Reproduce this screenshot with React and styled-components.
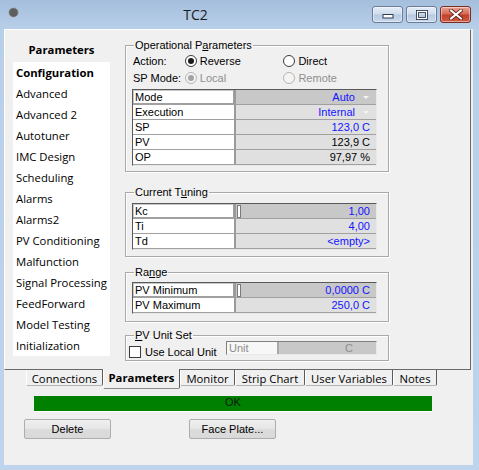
import React from 'react'
import styled, { createGlobalStyle } from 'styled-components'

const uiFont = `'Open Sans', 'Noto Sans', sans-serif`
const dlgFont = `'Liberation Sans', Arial, sans-serif`

const GlobalStyle = createGlobalStyle`
  html, body {
    margin: 0;
    padding: 0;
  }
  body {
    background: #bfd5ec;
    font-family: ${dlgFont};
  }
`

const Window = styled.div`
  width: 479px;
  height: 470px;
  box-sizing: border-box;
  display: flex;
  flex-direction: column;
  background: linear-gradient(180deg, #a4bedb 0%, #b8cfe9 29px, #bed4ec 100%);
  overflow: hidden;
`

const TitleBar = styled.div`
  height: 29px;
  box-sizing: border-box;
  display: flex;
  align-items: flex-start;
  padding: 6px 8px 0 8px;
  flex-shrink: 0;
`

const AppIcon = styled.svg`
  width: 11px;
  height: 11px;
  margin-top: 1px;
`

const Caption = styled.div`
  flex: 1;
  text-align: center;
  font: 14px ${uiFont};
  line-height: 18px;
  color: #1b1b24;
`

const CaptionButtons = styled.div`
  display: flex;
  gap: 3px;
`

const CaptionButton = styled.div`
  width: 31px;
  height: 17px;
  box-sizing: border-box;
  border: 1px solid ${p => (p.$close ? '#7b2b22' : '#6a7c98')};
  border-radius: 3px;
  display: flex;
  align-items: center;
  justify-content: center;
  background: ${p =>
    p.$close
      ? 'linear-gradient(180deg, #e9a796 0%, #d66a55 45%, #c2402b 55%, #cf5b43 100%)'
      : 'linear-gradient(180deg, #e6eef8 0%, #cfdcec 45%, #b7cae1 55%, #c9d9ec 100%)'};
  box-shadow: inset 0 0 0 1px rgba(255, 255, 255, 0.45);
`

const Client = styled.div`
  flex: 1;
  margin: 0 6px 5px 4px;
  background: #f0f0f0;
  display: flex;
  flex-direction: column;
`

const TabPage = styled.div`
  height: 341px;
  margin-right: 2px;
  box-sizing: border-box;
  border-style: solid;
  border-width: 1px;
  border-color: #ffffff #696969 #696969 #ffffff;
  display: flex;
  padding-left: 8px;
`

const SideColumn = styled.div`
  width: 97px;
  display: flex;
  flex-direction: column;
`

const SideHeader = styled.div`
  height: 32px;
  box-sizing: border-box;
  padding-top: 12px;
  line-height: 15px;
  text-align: center;
  font: bold 11.3px ${uiFont};
  color: #000;
`

const ListBox = styled.div`
  background: #ffffff;
  height: 294px;
  box-sizing: border-box;
  padding-top: 3px;
`

const ListItem = styled.div`
  height: 21px;
  line-height: 21px;
  padding-left: 3px;
  font: ${p => (p.$bold ? 'bold' : 'normal')} 11.3px ${uiFont};
  color: #000;
  white-space: nowrap;
`

const MainColumn = styled.div`
  width: 264px;
  margin-left: 15px;
  display: flex;
  flex-direction: column;
`

const Group = styled.fieldset`
  margin: ${p => p.$top}px 0 0 0;
  padding: ${p => p.$pt}px 6px ${p => p.$pb}px 6px;
  min-width: 0;
  border: 1px solid #a9a9a9;
  box-shadow: inset 1px 1px 0 #fff, 1px 1px 0 #fff;
  font: 11px ${dlgFont};
`

const Legend = styled.legend`
  padding: 0 1px;
  margin-left: 2px;
  line-height: 12px;
  font: 11px ${dlgFont};
  color: #000;
`

const OptionRow = styled.div`
  display: flex;
  align-items: center;
  height: 16px;
  margin-top: ${p => p.$top || 0}px;
  margin-left: 1px;
`

const OptionLabel = styled.div`
  width: 52px;
  color: #000;
`

const RadioOption = styled.div`
  width: ${p => p.$w || 99}px;
  display: flex;
  align-items: center;
  gap: 3px;
  color: ${p => (p.$disabled ? '#8f8f8f' : '#000')};
`

const RadioDot = styled.span`
  width: 12px;
  height: 12px;
  box-sizing: border-box;
  border-radius: 50%;
  border: 1px solid ${p => (p.$disabled ? '#b5b5b5' : '#3a3a3a')};
  background: ${p => (p.$disabled ? '#f4f4f4' : '#ffffff')};
  display: flex;
  align-items: center;
  justify-content: center;
  &::after {
    content: '';
    width: 6px;
    height: 6px;
    border-radius: 50%;
    background: ${p => (p.$disabled ? '#a3a3a3' : '#1a1a1a')};
    display: ${p => (p.$checked ? 'block' : 'none')};
  }
`

const PropGrid = styled.div`
  width: 245px;
  box-sizing: border-box;
  margin-top: ${p => p.$top || 0}px;
  border-style: solid;
  border-width: 1px;
  border-color: #595959 #e8e8e8 #e8e8e8 #595959;
  box-shadow: inset 1px 1px 0 #a0a0a0;
`

const PropRow = styled.div`
  display: grid;
  grid-template-columns: 103px 1fr;
  height: 15px;
  box-sizing: border-box;
  border-bottom: 1px solid #a0a0a0;
  line-height: 14px;
`

const PropLabel = styled.div`
  background: #ffffff;
  padding-left: 2px;
  border-right: 2px solid #9a9a9a;
  color: #000;
  white-space: nowrap;
  box-shadow: ${p => (p.$active ? 'inset -1px -1px 0 #a0a0a0, inset 1px 1px 0 #c8c8c8' : 'none')};
`

const PropValue = styled.div`
  display: flex;
  align-items: center;
  justify-content: flex-end;
  padding-right: ${p => (p.$drop ? 7 : 6)}px;
  background: ${p => (p.$active ? '#c8c8c8' : '#e0e0e0')};
  color: ${p => (p.$blue ? '#1414ff' : '#000')};
  white-space: nowrap;
`

const DropArrow = styled.span`
  width: 0;
  height: 0;
  margin-left: 8px;
  border-left: 3px solid transparent;
  border-right: 3px solid transparent;
  border-top: 3px solid #f4f4f4;
`

const Thumb = styled.span`
  width: 2px;
  height: 11px;
  margin-left: 1px;
  margin-right: auto;
  background: #ffffff;
  border: 1px solid #7a7a7a;
`

const UnitRow = styled.div`
  display: flex;
  align-items: flex-start;
  height: 14px;
`

const CheckOption = styled.div`
  display: flex;
  align-items: center;
  gap: 4px;
  margin: 5px 0 0 -3px;
  color: #000;
`

const CheckBox = styled.span`
  width: 12px;
  height: 12px;
  box-sizing: border-box;
  border: 1px solid #3a3a3a;
  background: #ffffff;
`

const UnitBox = styled.div`
  margin: 0 5px 0 auto;
  width: 151px;
  height: 14px;
  box-sizing: border-box;
  display: grid;
  grid-template-columns: 52px 1fr;
  border-style: solid;
  border-width: 1px;
  border-color: #808080 #e8e8e8 #e8e8e8 #808080;
  line-height: 12px;
  color: #8d8d8d;
`

const UnitLabel = styled.div`
  background: #f7f7f7;
  padding-left: 2px;
  border-right: 2px solid #a8a8a8;
`

const UnitValue = styled.div`
  background: #c8c8c8;
  text-align: right;
  padding-right: 23px;
`

const TabBar = styled.div`
  display: flex;
  align-items: flex-start;
  height: 16px;
  margin-left: 22px;
`

const Tab = styled.div`
  width: ${p => p.$w}px;
  height: ${p => (p.$active ? 20 : 16)}px;
  margin-top: ${p => (p.$active ? -1 : 0)}px;
  box-sizing: border-box;
  padding-top: 1px;
  background: #f0f0f0;
  border-left: 1px solid #ffffff;
  border-right: 1px solid #5a5a5a;
  border-bottom: 1px solid ${p => (p.$active ? '#8a8a8a' : '#b4b4b4')};
  border-bottom-left-radius: 2px;
  border-bottom-right-radius: 2px;
  text-align: center;
  line-height: 14px;
  font: ${p => (p.$active ? 'bold' : 'normal')} 11.3px ${uiFont};
  color: #000;
  white-space: nowrap;
`

const StatusBar = styled.div`
  width: 398px;
  height: 15px;
  margin: 10px 0 0 30px;
  background: #008000;
  box-shadow: 0 1px 0 #ffffff;
  text-align: center;
  line-height: 15px;
  font: 11px ${dlgFont};
  color: #0b1a0b;
`

const ButtonRow = styled.div`
  display: flex;
  gap: 78px;
  margin-top: 8px;
  padding-left: 20px;
`

const PushButton = styled.button`
  width: 87px;
  height: 20px;
  padding: 0;
  box-sizing: border-box;
  border: 1px solid #adadad;
  border-radius: 2px;
  background: linear-gradient(180deg, #efefef 0%, #e6e6e6 50%, #dcdcdc 51%, #d9d9d9 100%);
  font: 11px ${dlgFont};
  color: #000;
`

const menu = [
  'Configuration', 'Advanced', 'Advanced 2', 'Autotuner', 'IMC Design', 'Scheduling',
  'Alarms', 'Alarms2', 'PV Conditioning', 'Malfunction', 'Signal Processing',
  'FeedForward', 'Model Testing', 'Initialization',
]

const operational = [
  { label: 'Mode', value: 'Auto', blue: true, drop: true, active: true },
  { label: 'Execution', value: 'Internal', blue: true, drop: true },
  { label: 'SP', value: '123,0 C', blue: true },
  { label: 'PV', value: '123,9 C' },
  { label: 'OP', value: '97,97 %' },
]

const tuning = [
  { label: 'Kc', value: '1,00', blue: true, active: true, thumb: true },
  { label: 'Ti', value: '4,00', blue: true },
  { label: 'Td', value: '<empty>', blue: true },
]

const range = [
  { label: 'PV Minimum', value: '0,0000 C', blue: true, active: true, thumb: true },
  { label: 'PV Maximum', value: '250,0 C', blue: true },
]

const tabs = [
  { name: 'Connections', w: 77 },
  { name: 'Parameters', w: 77, active: true },
  { name: 'Monitor', w: 55 },
  { name: 'Strip Chart', w: 70 },
  { name: 'User Variables', w: 88 },
  { name: 'Notes', w: 44 },
]

function Grid({ rows, top }) {
  return (
    <PropGrid $top={top}>
      {rows.map(r => (
        <PropRow key={r.label}>
          <PropLabel $active={r.active}>{r.label}</PropLabel>
          <PropValue $active={r.active} $blue={r.blue} $drop={r.drop}>
            {r.thumb && <Thumb />}
            {r.value}
            {r.drop && <DropArrow />}
          </PropValue>
        </PropRow>
      ))}
    </PropGrid>
  )
}

function Radio({ checked, disabled, w, children }) {
  return (
    <RadioOption $w={w} $disabled={disabled}>
      <RadioDot $checked={checked} $disabled={disabled} />
      {children}
    </RadioOption>
  )
}

export default function App() {
  return (
    <Window>
      <GlobalStyle />
      <TitleBar>
        <AppIcon viewBox="0 0 11 11">
          <circle cx="5.5" cy="5.5" r="4.6" fill="#5e5e5e" stroke="#9a9a9a" strokeWidth="1" strokeDasharray="1.2 1" />
        </AppIcon>
        <Caption>TC2</Caption>
        <CaptionButtons>
          <CaptionButton>
            <svg width="12" height="8" viewBox="0 0 12 8">
              <rect x="1" y="3.5" width="10" height="3.5" fill="#fff" stroke="#2f3b4f" strokeWidth="1" />
            </svg>
          </CaptionButton>
          <CaptionButton>
            <svg width="12" height="10" viewBox="0 0 12 10">
              <rect x="1.5" y="1.5" width="9" height="7" fill="none" stroke="#2f3b4f" strokeWidth="3" />
              <rect x="1.5" y="1.5" width="9" height="7" fill="none" stroke="#fff" strokeWidth="1.2" />
            </svg>
          </CaptionButton>
          <CaptionButton $close>
            <svg width="14" height="11" viewBox="0 0 14 11">
              <path d="M2 1.5 L12 9.5 M12 1.5 L2 9.5" stroke="#5a1d15" strokeWidth="3.6" strokeLinecap="square" />
              <path d="M2 1.5 L12 9.5 M12 1.5 L2 9.5" stroke="#fff" strokeWidth="2" strokeLinecap="square" />
            </svg>
          </CaptionButton>
        </CaptionButtons>
      </TitleBar>

      <Client>
        <TabPage>
          <SideColumn>
            <SideHeader>Parameters</SideHeader>
            <ListBox>
              {menu.map((m, i) => (
                <ListItem key={m} $bold={i === 0}>{m}</ListItem>
              ))}
            </ListBox>
          </SideColumn>

          <MainColumn>
            <Group $top={9} $pt={2} $pb={5}>
              <Legend>Operational P<u>a</u>rameters</Legend>
              <OptionRow>
                <OptionLabel>Action:</OptionLabel>
                <Radio checked>Reverse</Radio>
                <Radio>Direct</Radio>
              </OptionRow>
              <OptionRow $top={1}>
                <OptionLabel>SP Mode:</OptionLabel>
                <Radio checked disabled>Local</Radio>
                <Radio disabled>Remote</Radio>
              </OptionRow>
              <Grid rows={operational} top={3} />
            </Group>

            <Group $top={14} $pt={5} $pb={6}>
              <Legend>Current T<u>u</u>ning</Legend>
              <Grid rows={tuning} />
            </Group>

            <Group $top={9} $pt={4} $pb={7}>
              <Legend>Ra<u>n</u>ge</Legend>
              <Grid rows={range} />
            </Group>

            <Group $top={7} $pt={0} $pb={5}>
              <Legend><u>P</u>V Unit Set</Legend>
              <UnitRow>
                <CheckOption>
                  <CheckBox />
                  Use Local Unit
                </CheckOption>
                <UnitBox>
                  <UnitLabel>Unit</UnitLabel>
                  <UnitValue>C</UnitValue>
                </UnitBox>
              </UnitRow>
            </Group>
          </MainColumn>
        </TabPage>

        <TabBar>
          {tabs.map(t => (
            <Tab key={t.name} $w={t.w} $active={t.active}>{t.name}</Tab>
          ))}
        </TabBar>

        <StatusBar>OK</StatusBar>

        <ButtonRow>
          <PushButton>Delete</PushButton>
          <PushButton>Face Plate...</PushButton>
        </ButtonRow>
      </Client>
    </Window>
  )
}
